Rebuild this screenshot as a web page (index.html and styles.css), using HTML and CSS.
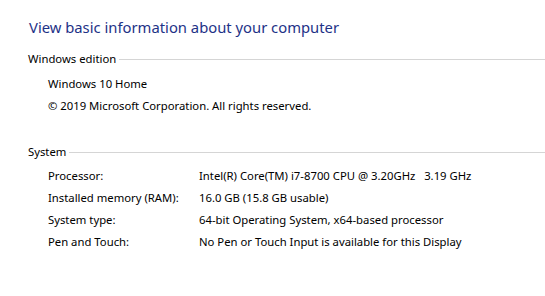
FILE: index.html
```html
<!DOCTYPE html>
<html lang="en">
<head>
    <meta charset="UTF-8">
    <title>System</title>
    <link rel="stylesheet" href="styles.css">
</head>
<body>
<h1 class="title">View basic information about your computer</h1>

<div class="section">
    <div class="section-head"><span>Windows edition</span><div class="rule"></div></div>
    <div class="plain">Windows 10 Home</div>
    <div class="plain">&copy; 2019 Microsoft Corporation. All rights reserved.</div>
</div>

<div class="section system">
    <div class="section-head"><span>System</span><div class="rule"></div></div>
    <div class="info-row"><span class="label">Processor:</span><span class="value">Intel(R) Core(TM) i7-8700 CPU @ 3.20GHz&nbsp;&nbsp;&nbsp;3.19 GHz</span></div>
    <div class="info-row"><span class="label">Installed memory (RAM):</span><span class="value">16.0 GB (15.8 GB usable)</span></div>
    <div class="info-row"><span class="label">System type:</span><span class="value">64-bit Operating System, x64-based processor</span></div>
    <div class="info-row"><span class="label">Pen and Touch:</span><span class="value">No Pen or Touch Input is available for this Display</span></div>
</div>
</body>
</html>
```

FILE: styles.css
```css
body {
    margin: 0;
    background: #fff;
    color: #000;
    font-family: "Segoe UI", "Noto Sans", sans-serif;
    font-size: 11.3px;
}
.title {
    margin: 16px 0 0 29px;
    font-size: 14.8px;
    font-weight: normal;
    line-height: 22px;
    color: #1e3287;
}
.section {
    margin-top: 10px;
}
.section.system {
    margin-top: 24px;
}
.section-head {
    display: flex;
    align-items: center;
    padding-left: 28px;
    line-height: 22px;
}
.rule {
    flex: 1;
    height: 1px;
    margin-left: 3px;
    background: #d5d5d5;
}
.plain {
    padding-left: 48px;
    line-height: 22px;
    margin-top: 3px;
}
.plain + .plain {
    margin-top: 0;
}
.info-row {
    display: grid;
    grid-template-columns: 151px 1fr;
    padding-left: 48px;
    line-height: 22px;
}
.section-head + .info-row {
    margin-top: 2px;
}
```
